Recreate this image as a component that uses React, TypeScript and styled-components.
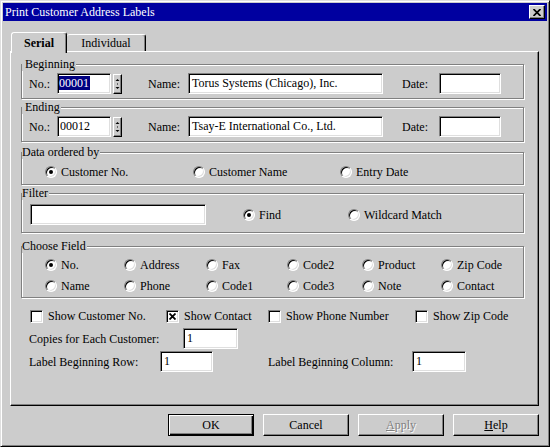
import { FC, ReactNode } from "react";
import styled, { createGlobalStyle, css } from "styled-components";

const FACE = "#cccccc";

const GlobalStyle = createGlobalStyle`
  html, body {
    margin: 0;
    padding: 0;
    background: ${FACE};
  }
  body {
    font-family: "Liberation Serif", "Times New Roman", serif;
    font-size: 12px;
    color: #000;
  }
  * {
    box-sizing: border-box;
  }
`;

const raised = css`
  border: 1px solid;
  border-color: #fff #000 #000 #fff;
  box-shadow: inset -1px -1px #808080;
`;

const sunken = css`
  border: 1px solid;
  border-color: #808080 #fff #fff #808080;
  box-shadow: inset 1px 1px #000, inset -1px -1px #dfdfdf;
`;

const Window = styled.div`
  width: 550px;
  height: 447px;
  background: ${FACE};
  border: 1px solid;
  border-color: #dfdfdf #000 #000 #dfdfdf;
  box-shadow: inset 1px 1px #fff, inset -1px -1px #808080;
  padding: 2px;
  display: flex;
  flex-direction: column;
`;

const TitleBar = styled.div`
  height: 18px;
  flex: none;
  background: #0000a0;
  color: #fff;
  display: flex;
  align-items: center;
  justify-content: space-between;
  padding: 0 2px;
  line-height: 14px;
`;

const CloseButton = styled.div`
  width: 16px;
  height: 14px;
  background: ${FACE};
  ${raised};
  display: flex;
  align-items: center;
  justify-content: center;
`;

const Body = styled.div`
  flex: 1;
  display: flex;
  flex-direction: column;
  padding: 11px 8px 0 7px;
`;

const TabStrip = styled.div`
  height: 19px;
  display: flex;
  align-items: flex-end;
  padding-left: 1px;
  position: relative;
  z-index: 1;
`;

const Tab = styled.div<{ $active?: boolean; $w: number }>`
  width: ${({ $w }) => $w}px;
  height: ${({ $active }) => ($active ? 21 : 17)}px;
  margin-bottom: ${({ $active }) => ($active ? -2 : 0)}px;
  background: ${FACE};
  border: 1px solid;
  border-bottom: none;
  border-left-width: ${({ $active }) => ($active ? 1 : 0)}px;
  border-color: #fff #000 transparent #fff;
  border-radius: 3px 3px 0 0;
  box-shadow: inset -1px 0 #808080;
  font-weight: ${({ $active }) => ($active ? "bold" : "normal")};
  display: flex;
  justify-content: center;
  padding-top: ${({ $active }) => ($active ? 3 : 1)}px;
  line-height: 14px;
`;

const Panel = styled.div`
  height: 355px;
  flex: none;
  border: 1px solid;
  border-color: #fff #000 #000 #fff;
  box-shadow: inset -1px -1px #808080;
  padding: 5px 14px 0 10px;
  display: flex;
  flex-direction: column;
`;

const Group = styled.fieldset<{ $mt: number }>`
  margin: ${({ $mt }) => $mt}px 0 0;
  padding: 0;
  min-width: 0;
  border: 1px solid #808080;
  box-shadow: inset 1px 1px #fff, 1px 1px #fff;
`;

const Legend = styled.legend<{ $indent?: number }>`
  padding: 0 1px 0 ${({ $indent }) => $indent ?? 0}px;
  line-height: 14px;
  background: ${FACE};
`;

const Row = styled.div<{ $pad: string }>`
  display: flex;
  align-items: center;
  padding: ${({ $pad }) => $pad};
`;

const Label = styled.span<{ $w?: number; $ml?: number }>`
  flex: none;
  width: ${({ $w }) => ($w ? `${$w}px` : "auto")};
  margin-left: ${({ $ml }) => $ml ?? 0}px;
  line-height: 14px;
  white-space: nowrap;
`;

const TextBox = styled.div<{ $w: number; $ml?: number; $h?: number }>`
  flex: none;
  width: ${({ $w }) => $w}px;
  height: ${({ $h }) => $h ?? 21}px;
  margin-left: ${({ $ml }) => $ml ?? 0}px;
  background: #fff;
  ${sunken};
  padding: 2px 0 0 3px;
  line-height: 14px;
  white-space: nowrap;
  overflow: hidden;
`;

const Selected = styled.span`
  background: #000080;
  color: #fff;
  margin-left: -1px;
  padding: 0 1px 0 0;
`;

const Spinner = styled.div`
  flex: none;
  width: 9px;
  height: 20px;
  margin-left: 2px;
  background: ${FACE};
  ${raised};
  display: flex;
  align-items: center;
  justify-content: center;
`;

const RadioGrid = styled.div<{ $cols: string; $pad: string }>`
  display: grid;
  grid-template-columns: ${({ $cols }) => $cols};
  row-gap: 7px;
  padding: ${({ $pad }) => $pad};
`;

const ChoiceWrap = styled.label<{ $w?: number; $ml?: number; $gap?: number }>`
  display: flex;
  align-items: center;
  gap: ${({ $gap }) => $gap ?? 4}px;
  flex: none;
  width: ${({ $w }) => ($w ? `${$w}px` : "auto")};
  margin-left: ${({ $ml }) => $ml ?? 0}px;
  line-height: 14px;
  white-space: nowrap;
`;

const RadioDot = styled.span<{ $on?: boolean }>`
  flex: none;
  width: 12px;
  height: 12px;
  border-radius: 50%;
  background: #fff;
  border: 1px solid;
  border-color: #808080 #fff #fff #808080;
  box-shadow: inset 1px 1px #000, inset -1px -1px #dfdfdf;
  display: flex;
  align-items: center;
  justify-content: center;

  &::after {
    content: "";
    width: 4px;
    height: 4px;
    border-radius: 50%;
    background: #000;
    display: ${({ $on }) => ($on ? "block" : "none")};
  }
`;

const CheckBox = styled.span`
  flex: none;
  width: 13px;
  height: 13px;
  background: #fff;
  ${sunken};
  display: flex;
  align-items: center;
  justify-content: center;
`;

const Options = styled.div`
  display: flex;
  flex-direction: column;
`;

const CheckRow = styled.div`
  display: grid;
  grid-template-columns: 136px 102px 147px auto;
  margin-top: 11px;
  padding-left: 9px;
`;

const ButtonBar = styled.div`
  display: flex;
  justify-content: flex-end;
  gap: 9px;
  margin-top: 8px;
`;

const Button = styled.div<{ $default?: boolean; $disabled?: boolean }>`
  width: 86px;
  height: 22px;
  background: ${FACE};
  display: flex;
  align-items: center;
  justify-content: center;
  line-height: 14px;
  ${({ $default }) =>
    $default
      ? css`
          border: 1px solid #000;
          box-shadow: inset 1px 1px #fff, inset -1px -1px #000,
            inset -2px -2px #808080;
        `
      : css`
          border: 1px solid;
          border-color: #fff #000 #000 #fff;
          box-shadow: inset -1px -1px #808080;
        `}
  color: ${({ $disabled }) => ($disabled ? "#808080" : "#000")};
  text-shadow: ${({ $disabled }) => ($disabled ? "1px 1px #fff" : "none")};
`;

const Key = styled.span`
  text-decoration: underline;
`;

const Radio: FC<{ on?: boolean; children: ReactNode; w?: number; ml?: number }> = ({
  on,
  children,
  w,
  ml,
}) => (
  <ChoiceWrap $w={w} $ml={ml}>
    <RadioDot $on={on} />
    <span>{children}</span>
  </ChoiceWrap>
);

const Check: FC<{ on?: boolean; children: ReactNode }> = ({ on, children }) => (
  <ChoiceWrap $gap={5}>
    <CheckBox>
      {on && (
        <svg width="7" height="7" viewBox="0 0 7 7">
          <path d="M0.5 0.5 L6.5 6.5 M6.5 0.5 L0.5 6.5" stroke="#000" strokeWidth="1.8" />
        </svg>
      )}
    </CheckBox>
    <span>{children}</span>
  </ChoiceWrap>
);

const SpinArrows = () => (
  <Spinner>
    <svg width="5" height="14" viewBox="0 0 5 14">
      <path d="M2.5 2 L4.5 4 L0.5 4 Z" fill="#000" />
      <rect x="2" y="6.5" width="1" height="1" fill="#000" />
      <path d="M0.5 10 L4.5 10 L2.5 12 Z" fill="#000" />
    </svg>
  </Spinner>
);

const RangeRow: FC<{ no: ReactNode; name: string }> = ({ no, name }) => (
  <Row $pad="2px 0 4px 7px">
    <Label $w={28}>No.:</Label>
    <TextBox $w={54} style={{ paddingLeft: 2 }}>
      {no}
    </TextBox>
    <SpinArrows />
    <Label $w={40} $ml={26}>
      Name:
    </Label>
    <TextBox $w={195}>{name}</TextBox>
    <Label $w={37} $ml={19}>
      Date:
    </Label>
    <TextBox $w={62} />
  </Row>
);

const fields = [
  ["No.", "Address", "Fax", "Code2", "Product", "Zip Code"],
  ["Name", "Phone", "Code1", "Code3", "Note", "Contact"],
];

export default function App() {
  return (
    <>
      <GlobalStyle />
      <Window>
        <TitleBar>
          <span>Print Customer Address Labels</span>
          <CloseButton>
            <svg width="8" height="7" viewBox="0 0 8 7">
              <path d="M0.5 0 L7.5 7 M7.5 0 L0.5 7" stroke="#000" strokeWidth="1.7" />
            </svg>
          </CloseButton>
        </TitleBar>
        <Body>
          <TabStrip>
            <Tab $active $w={56}>
              Serial
            </Tab>
            <Tab $w={79}>Individual</Tab>
          </TabStrip>
          <Panel>
            <Group $mt={0}>
              <Legend $indent={3}>Beginning</Legend>
              <RangeRow no={<Selected>00001</Selected>} name="Torus Systems (Chicago), Inc." />
            </Group>
            <Group $mt={1}>
              <Legend $indent={3}>Ending</Legend>
              <RangeRow no="00012" name="Tsay-E International Co., Ltd." />
            </Group>
            <Group $mt={3}>
              <Legend>Data ordered by</Legend>
              <RadioGrid $cols="148px 147px auto" $pad="6px 0 5px 23px">
                <Radio on>Customer No.</Radio>
                <Radio>Customer Name</Radio>
                <Radio>Entry Date</Radio>
              </RadioGrid>
            </Group>
            <Group $mt={1}>
              <Legend>Filter</Legend>
              <Row $pad="4px 0 7px 8px">
                <TextBox $w={176} />
                <Radio on w={105} ml={37}>
                  Find
                </Radio>
                <Radio>Wildcard Match</Radio>
              </Row>
            </Group>
            <Group $mt={6}>
              <Legend>Choose Field</Legend>
              <RadioGrid $cols="79px 82px 81px 75px 79px auto" $pad="5px 0 4px 23px">
                {fields.flat().map((f) => (
                  <Radio key={f} on={f === "No."}>
                    {f}
                  </Radio>
                ))}
              </RadioGrid>
            </Group>
            <Options>
              <CheckRow>
                <Check>Show Customer No.</Check>
                <Check on>Show Contact</Check>
                <Check>Show Phone Number</Check>
                <Check>Show Zip Code</Check>
              </CheckRow>
              <Row $pad="5px 0 0 8px">
                <Label $w={154}>Copies for Each Customer:</Label>
                <TextBox $w={55}>1</TextBox>
              </Row>
              <Row $pad="2px 0 0 8px">
                <Label $w={131}>Label Beginning Row:</Label>
                <TextBox $w={53}>1</TextBox>
                <Label $w={144} $ml={55}>
                  Label Beginning Column:
                </Label>
                <TextBox $w={54}>1</TextBox>
              </Row>
            </Options>
          </Panel>
          <ButtonBar>
            <Button $default>OK</Button>
            <Button>Cancel</Button>
            <Button $disabled>
              <Key>A</Key>pply
            </Button>
            <Button>
              <Key>H</Key>elp
            </Button>
          </ButtonBar>
        </Body>
      </Window>
    </>
  );
}
